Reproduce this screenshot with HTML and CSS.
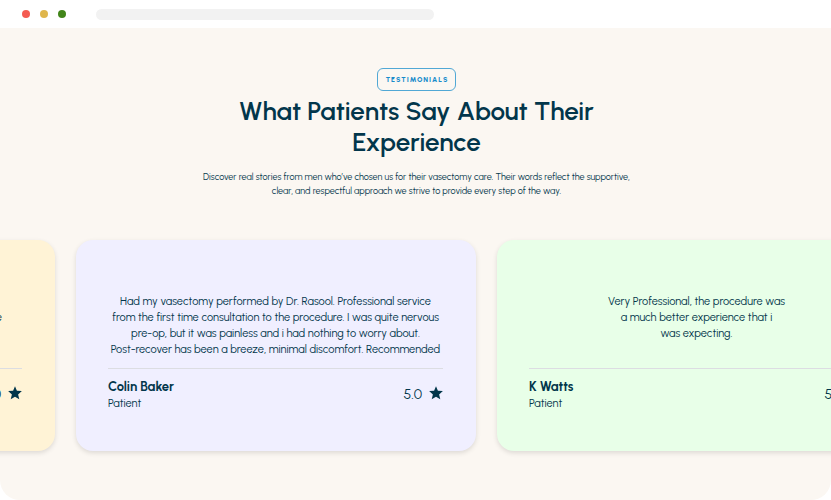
FILE: index.html
```html
<!DOCTYPE html>
<html lang="en">
<head>
<meta charset="utf-8">
<meta name="viewport" content="width=device-width, initial-scale=1">
<title>Testimonials</title>
<link rel="stylesheet" href="styles.css">
</head>
<body>
<header class="browser-bar">
  <span class="dot dot-red"></span>
  <span class="dot dot-yellow"></span>
  <span class="dot dot-green"></span>
  <span class="address"></span>
</header>
<main class="testimonials">
  <div class="intro">
    <span class="tag">TESTIMONIALS</span>
    <h1>What Patients Say About Their<br>Experience</h1>
    <p>Discover real stories from men who’ve chosen us for their vasectomy care. Their words reflect the supportive,<br>clear, and respectful approach we strive to provide every step of the way.</p>
  </div>
  <div class="carousel">
    <article class="card card-yellow">
      <p class="quote quote-end"><br>e</p>
      <footer class="author">
        <div></div>
        <div class="rating">5.0
          <svg class="star" viewBox="0 0 14 14"><path d="M7 .2 8.9 4.7 13.9 5.1 10.1 8.4 11.3 13.3 7 10.7 2.7 13.3 3.9 8.4.1 5.1 5.1 4.7Z"/></svg>
        </div>
      </footer>
    </article>
    <article class="card card-lilac">
      <p class="quote">Had my vasectomy performed by Dr. Rasool. Professional service<br>from the first time consultation to the procedure. I was quite nervous<br>pre-op, but it was painless and i had nothing to worry about.<br>Post-recover has been a breeze, minimal discomfort. Recommended</p>
      <footer class="author">
        <div><h2>Colin Baker</h2><p>Patient</p></div>
        <div class="rating">5.0
          <svg class="star" viewBox="0 0 14 14"><path d="M7 .2 8.9 4.7 13.9 5.1 10.1 8.4 11.3 13.3 7 10.7 2.7 13.3 3.9 8.4.1 5.1 5.1 4.7Z"/></svg>
        </div>
      </footer>
    </article>
    <article class="card card-green">
      <p class="quote">Very Professional, the procedure was<br>a much better experience that i<br>was expecting.</p>
      <footer class="author">
        <div><h2>K Watts</h2><p>Patient</p></div>
        <div class="rating">5.0
          <svg class="star" viewBox="0 0 14 14"><path d="M7 .2 8.9 4.7 13.9 5.1 10.1 8.4 11.3 13.3 7 10.7 2.7 13.3 3.9 8.4.1 5.1 5.1 4.7Z"/></svg>
        </div>
      </footer>
    </article>
  </div>
</main>
</body>
</html>
```
FILE: styles.css
```css
* {
  box-sizing: border-box;
}

body {
  margin: 0;
  background: #fff;
  color: #02364b;
  font-family: Urbanist, Lato, sans-serif;
}

h1, h2, p {
  margin: 0;
}

.browser-bar {
  display: flex;
  align-items: center;
  gap: 10px;
  height: 28px;
  padding: 0 22px;
}

.dot {
  width: 8px;
  height: 8px;
  border-radius: 50%;
}

.dot-red { background: #f45b52; }
.dot-yellow { background: #dfb64c; }
.dot-green { background: #42851a; }

.address {
  width: 43%;
  height: 11px;
  margin-left: 20px;
  border-radius: 6px;
  background: #f2f2f2;
}

.testimonials {
  padding: 40px 0 49px;
  border-radius: 0 0 20px 20px;
  background: #fbf7f2;
  overflow: hidden;
}

.intro {
  display: flex;
  flex-direction: column;
  align-items: center;
  padding-left: 2px;
  text-align: center;
}

.tag {
  padding: 0 7px 0 8px;
  border: 1px solid #51a8d5;
  border-radius: 6px;
  color: #168bcb;
  font-size: 7px;
  font-weight: 800;
  line-height: 21px;
  letter-spacing: 1px;
}

.intro h1 {
  margin-top: 5px;
  font-size: 26px;
  font-weight: 600;
  line-height: 31px;
}

.intro p {
  margin-top: 12px;
  font-size: 9px;
  line-height: 14px;
}

.carousel {
  display: flex;
  gap: 21px;
  margin-top: 42px;
  margin-left: -345px;
}

.card {
  flex: 0 0 400px;
  padding: 54px 33px 36px 32px;
  border-radius: 17px;
  box-shadow: 0 2px 5px rgb(0 0 0 / 12%);
}

.card-yellow { background: #fff3d6; }
.card-lilac { background: #f0efff; }
.card-green { background: #e8ffe8; }

.quote {
  height: 74px;
  font-size: 11px;
  line-height: 16px;
  text-align: center;
  white-space: nowrap;
}

.quote-end {
  margin-right: 20px;
  text-align: right;
}

.author {
  display: flex;
  align-items: center;
  justify-content: space-between;
  height: 47px;
  border-top: 1px solid #dcdde2;
}

.author h2 {
  margin-top: 5px;
  font-size: 13px;
  font-weight: 700;
  line-height: 18px;
}

.author p {
  font-size: 11px;
  line-height: 16px;
}

.rating {
  display: flex;
  align-items: flex-start;
  gap: 7px;
  margin-top: 4px;
  font-size: 14px;
  line-height: 17px;
}

.star {
  width: 14px;
  height: 14px;
  fill: #02364b;
}
```
